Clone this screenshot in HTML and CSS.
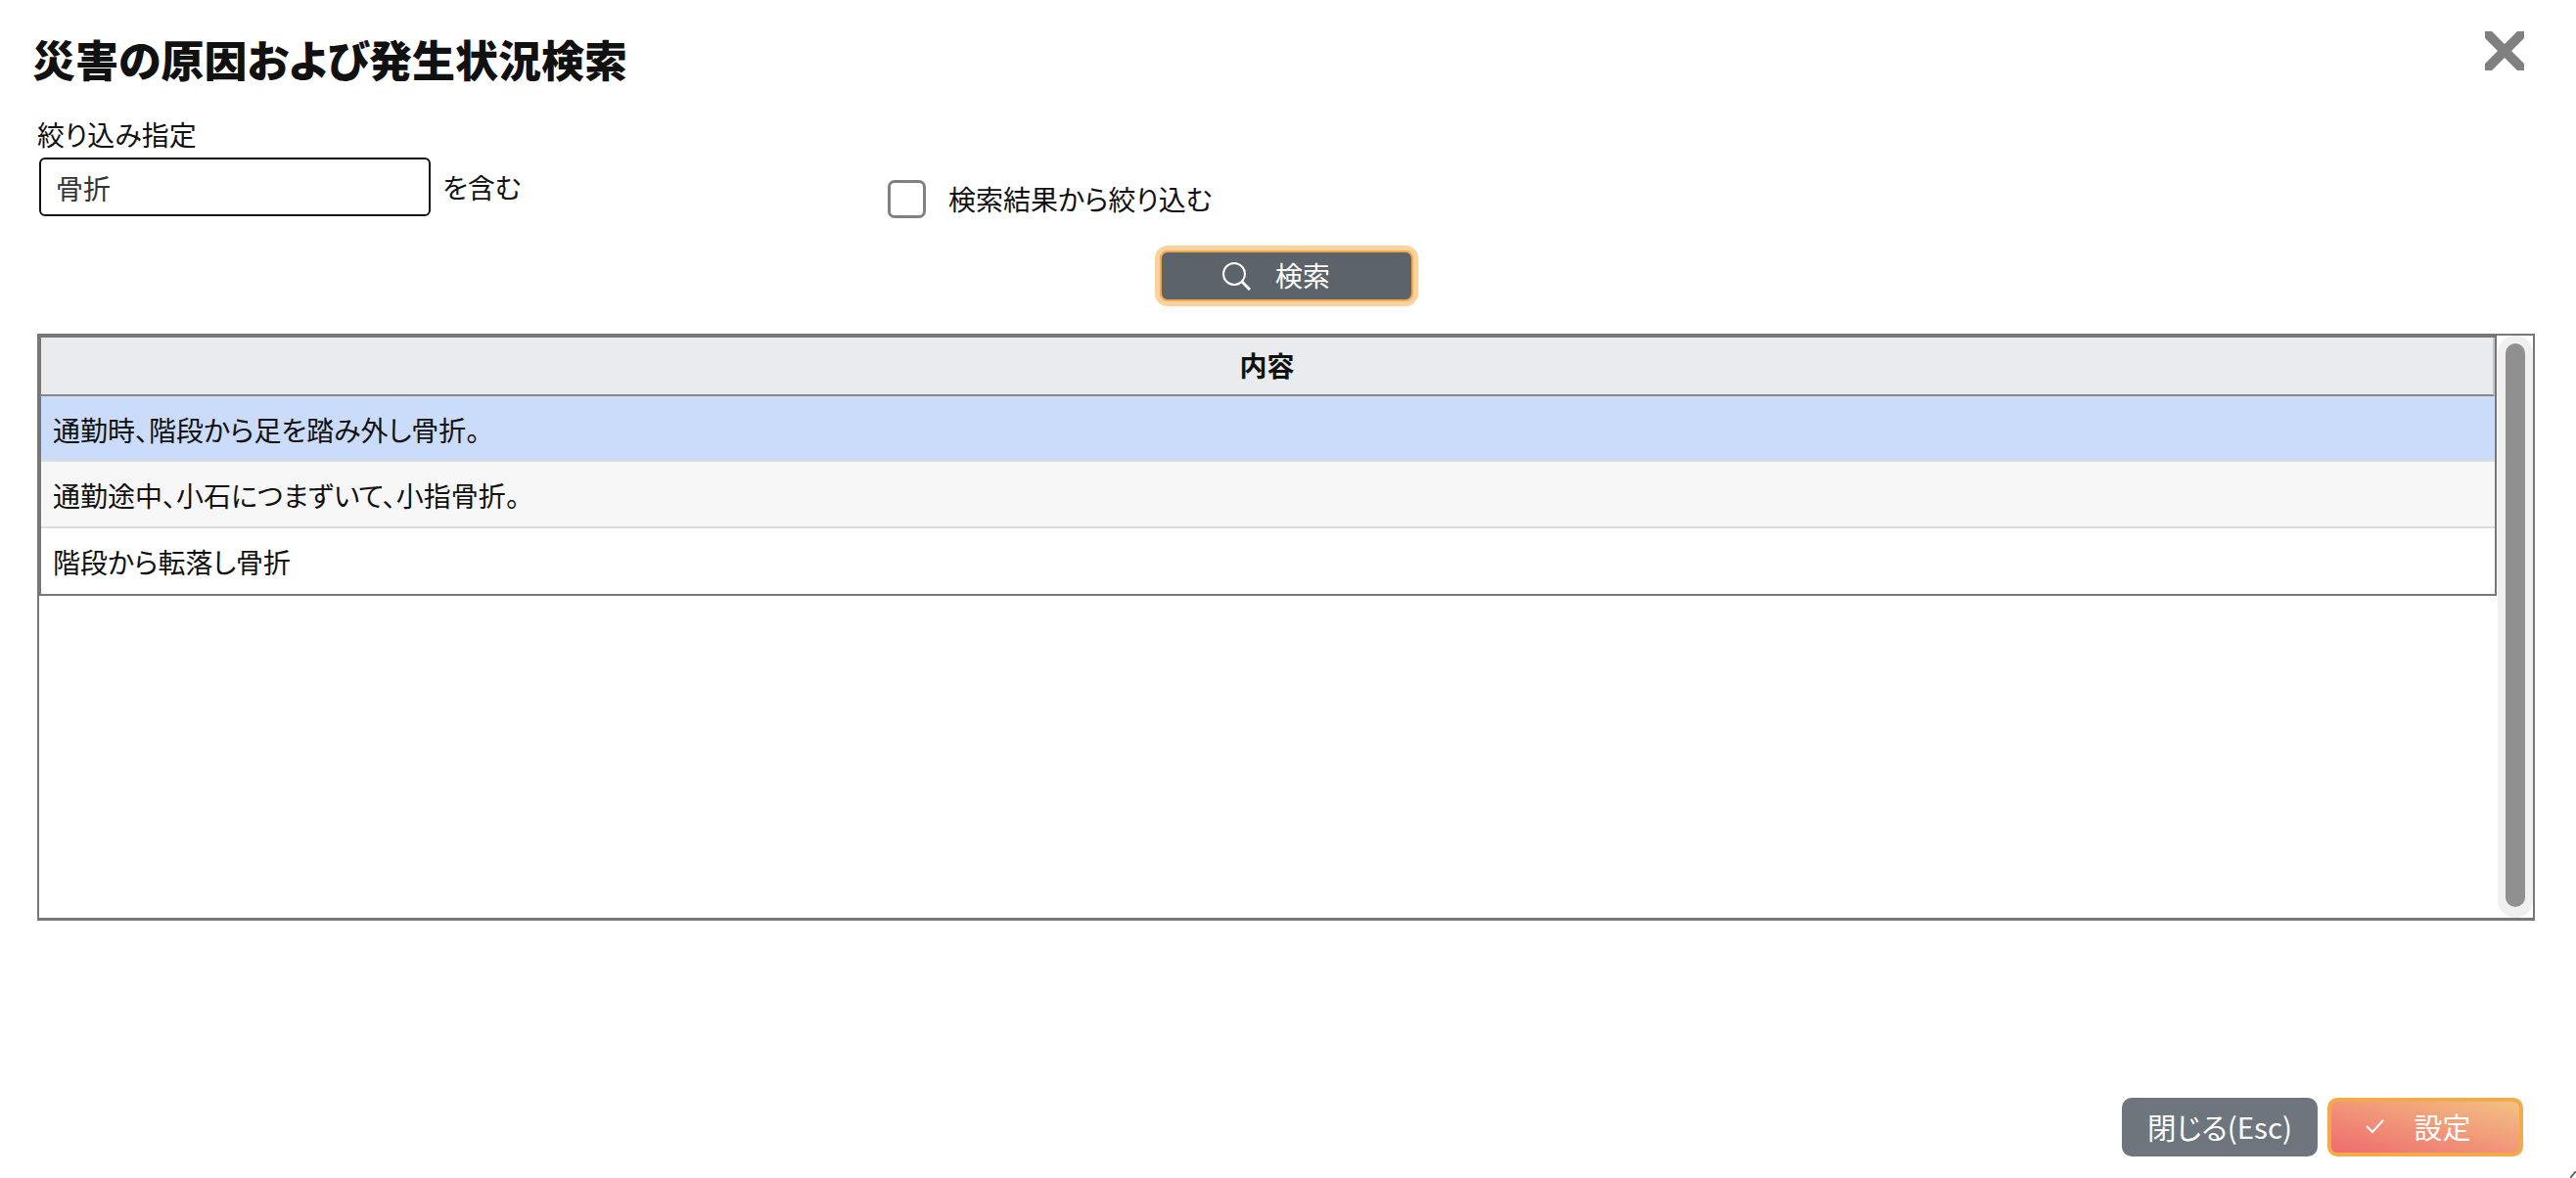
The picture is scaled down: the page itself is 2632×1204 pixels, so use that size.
FILE: index.html
```html
<!DOCTYPE html>
<html lang="ja">
<head>
<meta charset="utf-8">
<title>災害の原因および発生状況検索</title>
<link rel="stylesheet" href="styles.css">
</head>
<body>
<div class="dialog">
  <header class="head">
    <h1 class="title">災害の原因および発生状況検索</h1>
    <button class="close" aria-label="閉じる">
      <svg width="40" height="40" viewBox="0 0 40 40"><path d="M0 0H7L20 13L33 0H40V7L27 20L40 33V40H33L20 27L7 40H0V33L13 20L0 7Z" fill="#808080"/></svg>
    </button>
  </header>
  <section class="filter">
    <div class="filter-main">
      <div class="label">絞り込み指定</div>
      <div class="input-row">
        <input class="input" type="text" value="骨折">
        <span class="suffix">を含む</span>
      </div>
    </div>
    <label class="check">
      <span class="box"></span>
      <span class="check-text">検索結果から絞り込む</span>
    </label>
  </section>
  <div class="search-row">
    <button class="btn-search">
      <svg width="30" height="30" viewBox="0 0 30 30" fill="none" stroke="#fff"><circle cx="13" cy="13" r="11" stroke-width="2"/><path d="M21 21L29 29" stroke-width="3"/></svg>
      <span class="search-label">検索</span>
    </button>
  </div>
  <div class="results">
    <div class="table">
      <div class="thead">内容</div>
      <div class="row selected">通勤時、階段から足を踏み外し骨折。</div>
      <div class="row alt">通勤途中、小石につまずいて、小指骨折。</div>
      <div class="row last">階段から転落し骨折</div>
    </div>
    <div class="scroll"><div class="thumb"></div></div>
  </div>
  <footer class="foot">
    <button class="btn btn-close">閉じる(Esc)</button>
    <button class="btn btn-set">
      <svg width="20" height="16" viewBox="0 0 20 16" fill="none" stroke="#fff" stroke-width="2"><path d="M1 8L7 14L18 2"/></svg>
      <span>設定</span>
    </button>
  </footer>
  <svg class="grip" width="6" height="7" viewBox="0 0 6 7" fill="none" stroke="#666" stroke-width="2"><path d="M0 7L6 0"/></svg>
</div>
</body>
</html>
```
FILE: styles.css
```css
* { box-sizing: border-box; }
html, body { margin: 0; padding: 0; background: #fff; }
body {
  font-family: "Noto Sans CJK JP", "Noto Sans", sans-serif;
  font-size: 28px;
  color: #111;
  font-feature-settings: "palt";
}
button { font-family: inherit; font-feature-settings: inherit; padding: 0; }
.dialog { position: relative; width: 2632px; height: 1204px; overflow: hidden; display: flex; flex-direction: column; }
.head { display: flex; justify-content: space-between; align-items: flex-start; height: 120px; padding: 32px 53px 0 33px; }
.title { margin: 0; font-size: 44px; font-weight: 900; line-height: 56px; color: #111; }
.close { width: 40px; height: 40px; border: 0; background: none; display: block; }
.filter { display: flex; height: 103px; padding-left: 38px; }
.filter-main { width: 869px; }
.label { line-height: 34px; height: 41px; }
.input-row { display: flex; align-items: center; padding-left: 2px; }
.input { width: 400px; height: 60px; border: 2px solid #111; border-radius: 6px; padding: 2px 16px 0 15px; font: inherit; font-feature-settings: inherit; color: #333; outline: none; }
.suffix { margin-left: 12px; }
.check { display: flex; align-items: center; height: 40px; margin-top: 63px; }
.box { width: 39px; height: 39px; border: 3px solid #808080; border-radius: 7px; background: #fff; }
.check-text { margin-left: 23px; }
.search-row { display: flex; padding-left: 1185px; height: 118px; padding-top: 33px; }
.btn-search { width: 259px; height: 52px; background: #5c636a; border: 2px solid #f0a94e; border-radius: 8px; box-shadow: 0 0 0 5px #fbd19c; color: #fff; font-size: 28px; line-height: 36px; display: flex; align-items: center; justify-content: center; gap: 25px; padding-right: 22px; }
.search-label { position: relative; top: -1px; }
.results { display: flex; margin-left: 38px; width: 2552px; height: 600px; border: 2px solid #777; border-bottom-width: 3px; }
.table { width: 2511px; height: 266px; border: 2px solid #777; }
.thead { height: 60px; background: #e9ebef; border-bottom: 2px solid #888; border-right: 2px solid #c4c4c4; text-align: center; font-weight: 700; line-height: 56px; }
.row { height: 68px; padding-left: 12px; line-height: 68px; border-bottom: 2px solid #ddd; }
.selected { height: 67px; background: #cbdcfb; }
.alt { background: #f7f7f7; }
.last { height: 67px; border-bottom: 0; }
.scroll { width: 36px; height: 595px; margin-left: 1px; background: #f0f0f0; border-radius: 18px; padding: 8px; }
.thumb { width: 20px; height: 576px; background: #909090; border-radius: 10px; }
.foot { display: flex; justify-content: flex-end; gap: 10px; padding-right: 54px; margin-top: 181px; }
.btn { width: 200px; height: 60px; border-radius: 10px; color: #fff; font-size: 29px; line-height: 40px; padding-bottom: 2px; display: flex; align-items: center; justify-content: center; }
.btn-close { background: #6f757d; border: 0; font-size: 29.5px; }
.btn-set { border: 4px solid #f4a94a; background: linear-gradient(to top right, #ee6b6e, #f3c283); gap: 29px; padding-right: 14px; }
.grip { position: absolute; right: 0; bottom: 0; }
```
